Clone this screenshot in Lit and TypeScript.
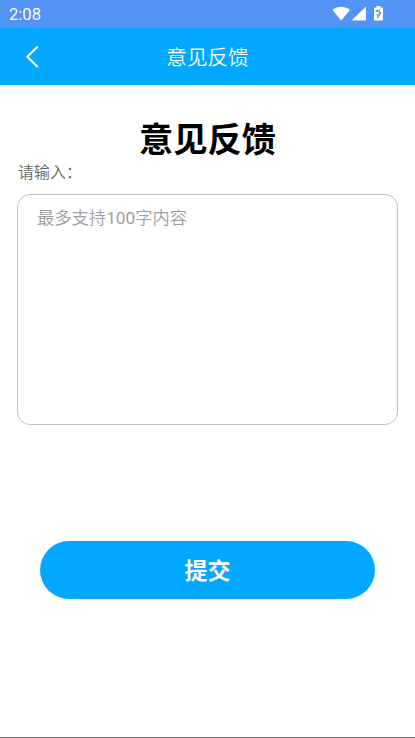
import { LitElement, html, css } from "lit";
import { customElement } from "lit/decorators.js";

@customElement("app-root")
export class AppRoot extends LitElement {
  static styles = css`
    :host { display: flex; flex-direction: column; box-sizing: border-box; height: 738px; background: #fff; border-bottom: 1px solid #6b6b6b; font-family: Roboto, "Noto Sans CJK SC", sans-serif; overflow: hidden; }
    .status { height: 28px; background: #5293f3; color: #fff; display: flex; align-items: center; justify-content: space-between; padding: 0 0 0 9px; font-size: 16.6px; font-weight: 400; flex: none; }
    .status svg { display: block; }
    .nav { height: 57px; flex: none; background: #00a9ff; color: #fff; display: grid; grid-template-columns: 64px 1fr 64px; align-items: center; text-align: center; font-size: 20.6px; font-weight: 350; }
    .title { padding-bottom: 2px; }
    .back { border: 0; background: none; padding: 0; height: 57px; }
    .back svg { display: block; }
    main { display: flex; flex-direction: column; padding: 30px 17px 0; }
    h1 { margin: 0; text-align: center; font-size: 34.3px; line-height: 50px; color: #000; font-weight: 700; }
    label { font-size: 16px; line-height: 20px; color: #666; font-weight: 350; margin-top: -2px; padding-left: 1px; }
    textarea { box-sizing: border-box; width: 381px; height: 231px; margin: 11px 0 0; border: 1px solid #c4c4c4; border-radius: 13px; padding: 11px 19px; resize: none; outline: 0; font: 400 17.3px/25px Roboto, "Noto Sans CJK SC DemiLight", "Noto Sans CJK SC", sans-serif; background: #fff; }
    textarea::placeholder { color: #9e9e9e; opacity: 1; }
    .submit { margin: 116px 23px 0; height: 58px; border: 0; border-radius: 29px; padding: 3px 0 0; background: #00a9ff; color: #fff; font: 700 23px/34px Roboto, "Noto Sans CJK SC", sans-serif; }
  `;
  render() {
    return html`
      <div class="status"><span>2:08</span>
        <svg width="90" height="28" viewBox="325 0 90 28" fill="#fff"><path d="M332.5 10C337.5 5.7 344.5 5.7 350 10L341.2 20.5Z"/><path d="M366 6.5V20.5H351.5Z"/><path d="M376.5 6h4v1.5h1.5q1 0 1 1v11q0 1-1 1h-7q-1 0-1-1v-11q0-1 1-1h1.5Z"/><path d="M376.2 11.8v-1.3h1.5v1.8M379.3 9.5v3.2h1.5l-2.8 4.5v-3.2h-1.5" fill="none" stroke="#5293f3" stroke-width="1.2"/></svg>
      </div>
      <div class="nav"><button class="back" aria-label="返回"><svg width="64" height="57" viewBox="0 0 64 57" fill="none" stroke="#fff" stroke-width="2.1" stroke-linecap="round"><path d="M37.2 18.9 27.3 28.7l9.9 9.8"/></svg></button><span class="title">意见反馈</span></div>
      <main><h1>意见反馈</h1><label for="content">请输入：</label><textarea id="content" placeholder="最多支持100字内容"></textarea><button class="submit">提交</button></main>`;
  }
}
